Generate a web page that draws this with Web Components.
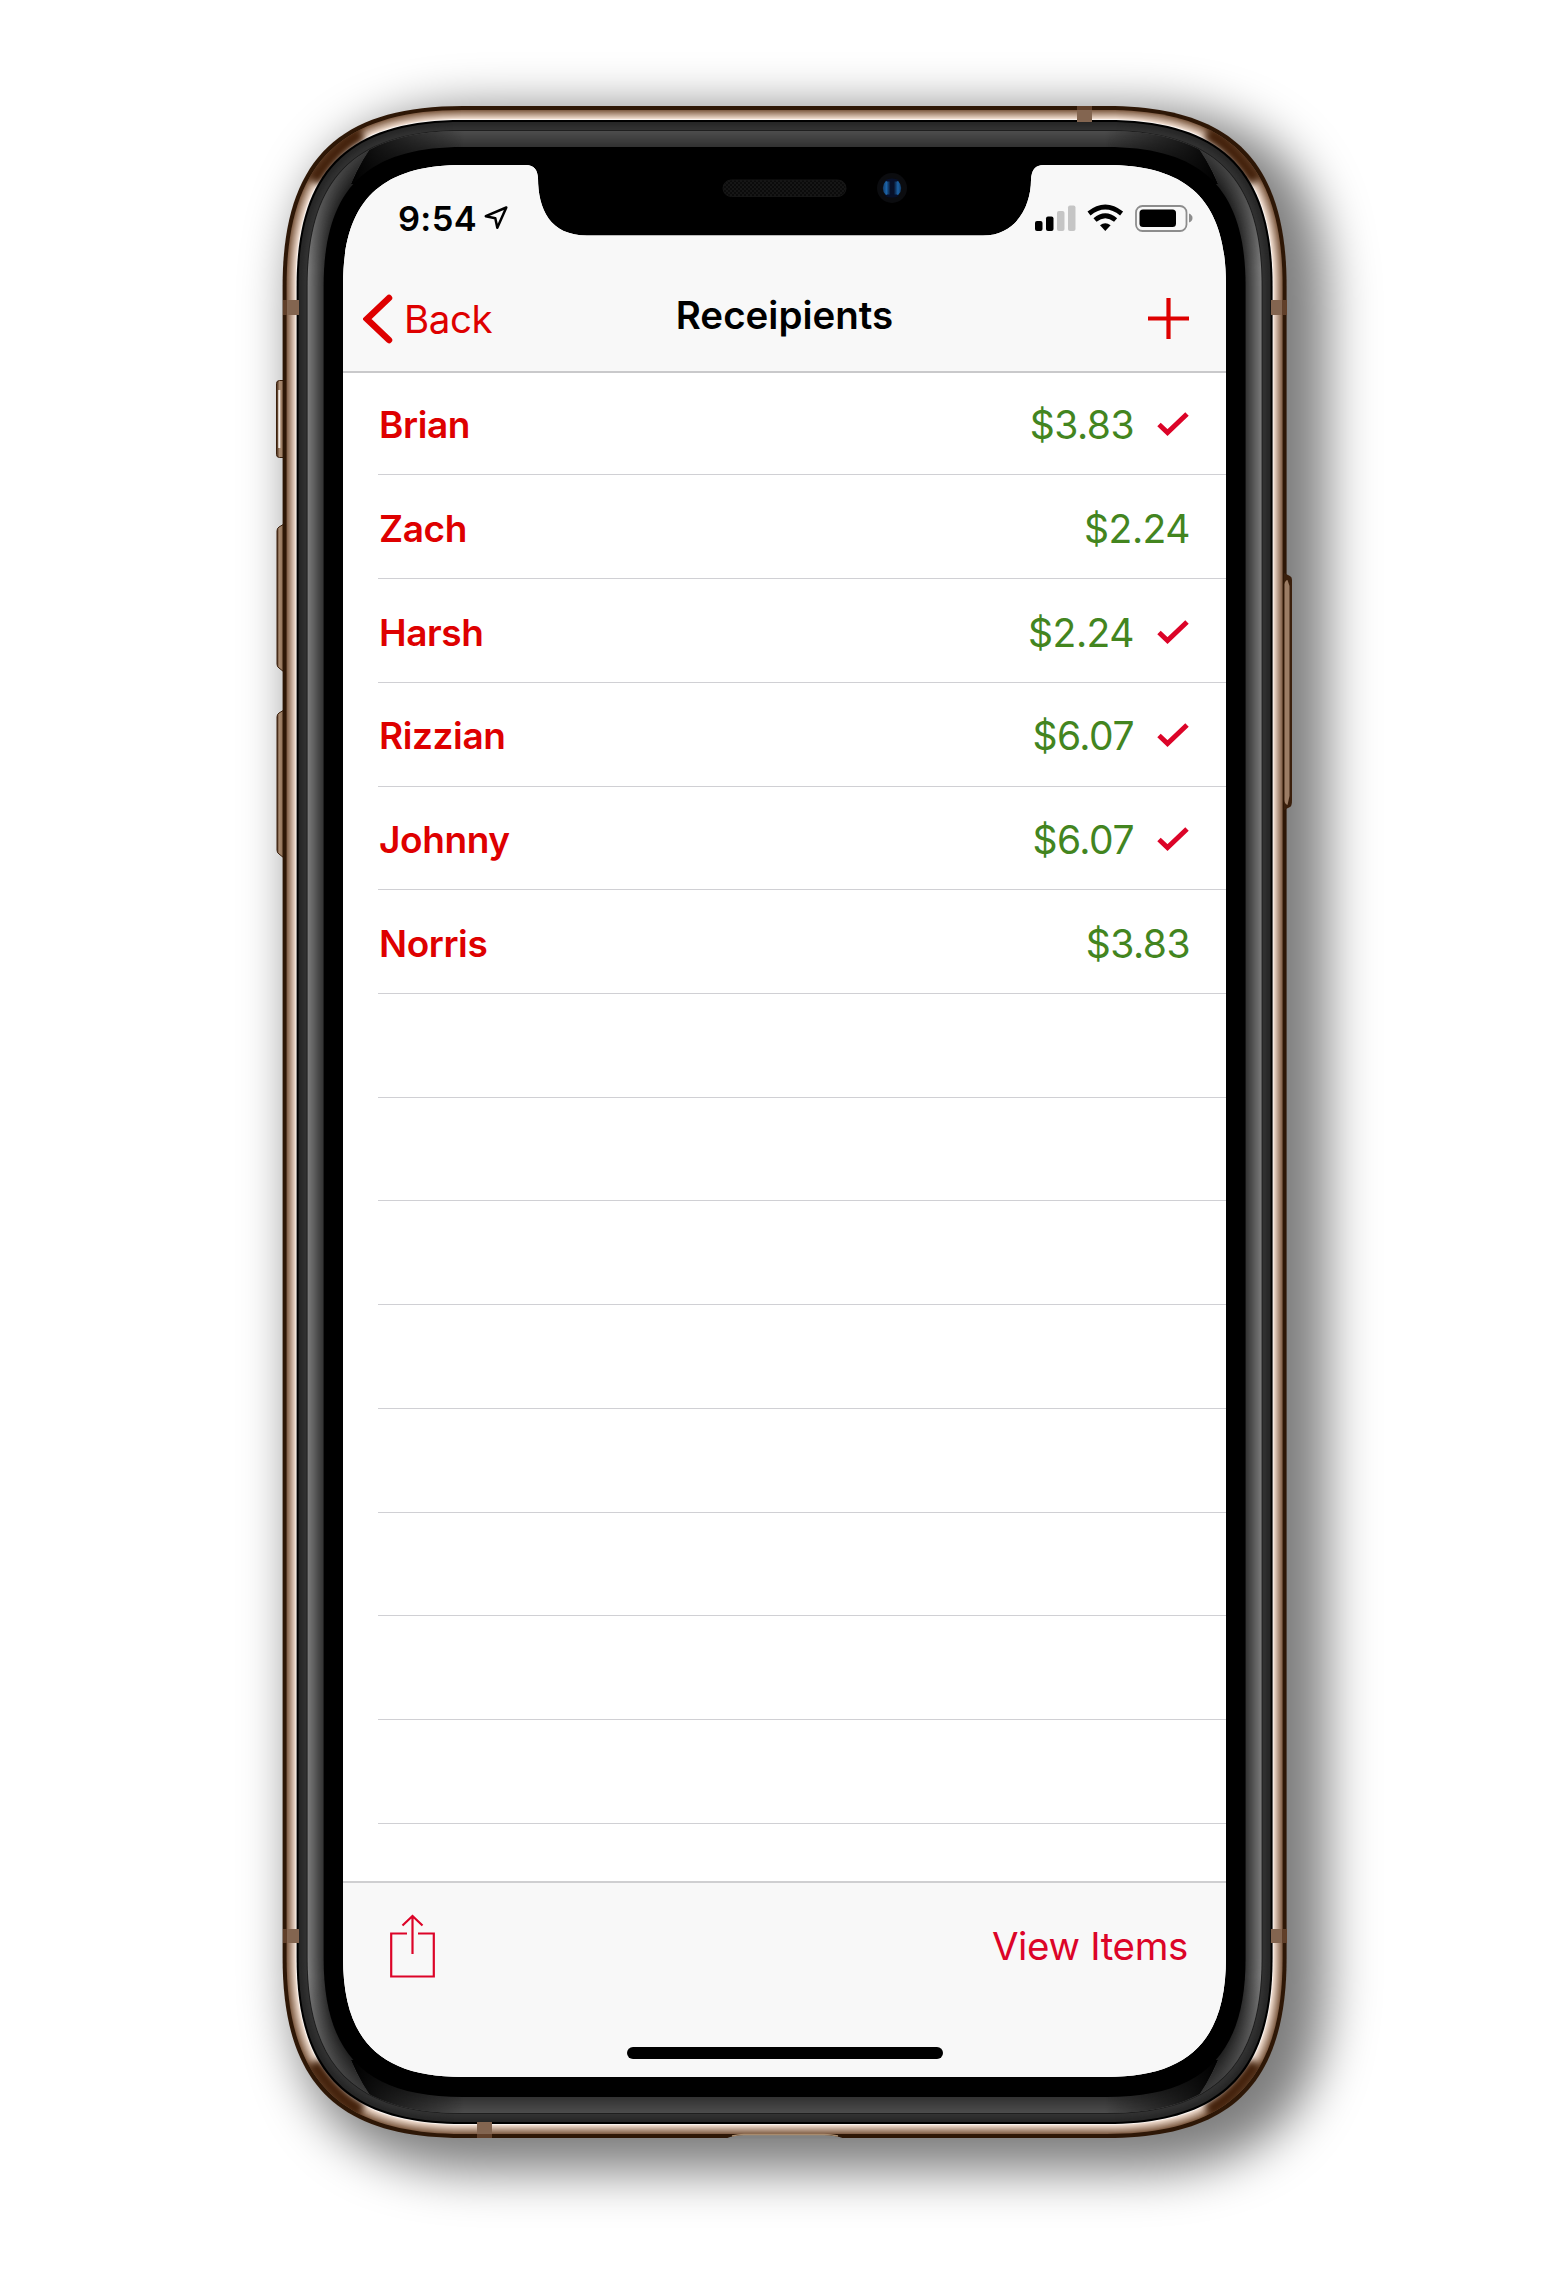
<!DOCTYPE html>
<html lang="en">
<head>
<meta charset="utf-8">
<title>Receipients</title>
<style>
body{margin:0;background:#fff;font-family:Inter,"Liberation Sans",sans-serif}
</style>
</head>
<body>
<phone-stage>
  <phone-frame></phone-frame>
  <phone-screen>
    <status-bar time="9:54"></status-bar>
    <nav-bar back="Back">Receipients</nav-bar>
    <recipient-list>
      <recipient-row name="Brian" amount="$3.83" checked></recipient-row>
      <recipient-row name="Zach" amount="$2.24"></recipient-row>
      <recipient-row name="Harsh" amount="$2.24" checked></recipient-row>
      <recipient-row name="Rizzian" amount="$6.07" checked></recipient-row>
      <recipient-row name="Johnny" amount="$6.07" checked></recipient-row>
      <recipient-row name="Norris" amount="$3.83"></recipient-row>
      <recipient-row></recipient-row><recipient-row></recipient-row><recipient-row></recipient-row><recipient-row></recipient-row>
      <recipient-row></recipient-row><recipient-row></recipient-row><recipient-row></recipient-row><recipient-row></recipient-row>
    </recipient-list>
    <tool-bar>View Items</tool-bar>
  </phone-screen>
</phone-stage>
<script>
const define = (name, render) => customElements.define(name, class extends HTMLElement {
  constructor() { super(); this.attachShadow({ mode: 'open' }); }
  connectedCallback() { this.shadowRoot.innerHTML = render(this); }
});

// Rectangle with continuous-curvature corners, inset by o from the phone's outline.
function shell(o, spread = 0) {
  const l = 282.6 + o - spread, t = 106 + o - spread, r = 1286.6 - o + spread, b = 2138 - o + spread;
  const e = 180 - o + spread, c = e * .305;
  return `M${l} ${t+e}C${l} ${t+c} ${l+c} ${t} ${l+e} ${t}H${r-e}C${r-c} ${t} ${r} ${t+c} ${r} ${t+e}V${b-e}C${r} ${b-c} ${r-c} ${b} ${r-e} ${b}H${l+e}C${l+c} ${b} ${l} ${b-c} ${l} ${b-e}Z`;
}
function mix(a, b, t) { return `rgb(${a.map((v, i) => Math.round(v + (b[i] - v) * t))})`; }
function rings(from, to, a, b) {
  let s = '';
  for (let o = from; o < to; o++) s += `<path d="${shell(o)}" fill="${mix(a, b, (o - from) / (to - from - 1))}"/>`;
  return s;
}

define('phone-stage', () => `
<style>:host{display:grid;width:1568px;height:2282px;overflow:hidden;background:#fff}
::slotted(*){grid-area:1/1}</style><slot></slot>`);

define('phone-frame', () => `
<style>:host{display:block}svg{display:block}</style>
<svg width="1568" height="2282" viewBox="0 0 1568 2282">
<defs>
 <filter id="blur" x="-20%" y="-20%" width="140%" height="140%" color-interpolation-filters="sRGB"><feGaussianBlur stdDeviation="25"/></filter>
 <filter id="soft" x="-20%" y="-20%" width="140%" height="140%" color-interpolation-filters="sRGB"><feGaussianBlur stdDeviation="3.500"/></filter>
 <linearGradient id="btn" x1="0" x2="1"><stop offset="0" stop-color="#3a1f0c"/><stop offset=".3" stop-color="#a98a70"/><stop offset=".75" stop-color="#93745b"/><stop offset="1" stop-color="#3a1f0c"/></linearGradient>
 <linearGradient id="fade" gradientUnits="userSpaceOnUse" x1="352" x2="1217" y1="0" y2="0"><stop offset="0" stop-color="#000"/><stop offset=".03" stop-color="#000" stop-opacity=".75"/><stop offset=".13" stop-color="#000" stop-opacity="0"/><stop offset=".87" stop-color="#000" stop-opacity="0"/><stop offset=".97" stop-color="#000" stop-opacity=".75"/><stop offset="1" stop-color="#000"/></linearGradient>
 <linearGradient id="vfade" gradientUnits="userSpaceOnUse" x1="0" x2="0" y1="140" y2="2104"><stop offset="0" stop-color="#000" stop-opacity=".6"/><stop offset=".065" stop-color="#000" stop-opacity="0"/><stop offset=".935" stop-color="#000" stop-opacity="0"/><stop offset="1" stop-color="#000" stop-opacity=".6"/></linearGradient>
 <clipPath id="ends"><path d="M398 118L376 141Q362 158 351 184H1218Q1207 158 1193 141L1171 118ZM398 2126L376 2103Q362 2086 351 2060H1218Q1207 2086 1193 2103L1171 2126Z"/></clipPath>
 <clipPath id="rim"><path d="${shell(4)}"/></clipPath>
 <pattern id="mesh" width="4" height="4" patternUnits="userSpaceOnUse"><rect width="4" height="4" fill="#0b0b0b"/><circle cx="1" cy="1" r=".8" fill="#222"/><circle cx="3" cy="3" r=".8" fill="#222"/></pattern>
 <linearGradient id="lens"><stop offset="0" stop-color="#123a66"/><stop offset=".2" stop-color="#1c64a8"/><stop offset=".42" stop-color="#071028"/><stop offset=".6" stop-color="#071028"/><stop offset=".82" stop-color="#1c64a8"/><stop offset="1" stop-color="#123a66"/></linearGradient>
</defs>
<path d="${shell(0, 15)}" transform="translate(25 18)" fill="#000" fill-opacity=".51" filter="url(#blur)"/>
<g fill="url(#btn)" stroke="#3a1f0c" stroke-width="1">
 <rect x="276.500" y="380.500" width="10" height="77" rx="3"/>
 <path d="M284 524l-5 3q-2 1-2 4v133q0 3 2 4l5 4zM284 710l-5 3q-2 1-2 4v133q0 3 2 4l5 4z"/>
</g>
<path d="M279.300 390v58" stroke="#f3ebe4" stroke-width="2"/>
<path d="${shell(0)}" fill="#2e1706"/>
${rings(4, 13, [132, 98, 74], [236, 216, 202])}
<path d="${shell(13)}" fill="#f8f2ee"/>
<g clip-path="url(#rim)"><g filter="url(#soft)" fill="none" stroke="#42200a" stroke-width="15"><path d="M1207 133Q1232 145 1256 181"/><path d="M362 133Q337 145 313 181"/><path d="M1207 2111Q1232 2099 1256 2063"/><path d="M362 2111Q337 2099 313 2063"/></g></g>
<path d="${shell(14)}" fill="#000"/>
${rings(16, 24, [38, 38, 38], [50, 50, 50])}
<path d="${shell(24)}" fill="#1f1f1f"/>
${rings(25, 41, [122, 122, 122], [52, 52, 52])}
<path d="${shell(25)}" fill="url(#vfade)"/>
<g clip-path="url(#ends)">${rings(25, 41, [76, 76, 76], [50, 50, 50])}<path d="${shell(25)}" fill="url(#fade)"/></g>
<path d="${shell(41)}" fill="#000"/>
<g fill="#836550"><rect x="283" y="300" width="16" height="15"/><rect x="1271" y="300" width="16" height="15"/><rect x="283" y="1929" width="16" height="14"/><rect x="1271" y="1929" width="16" height="14"/><rect x="1077" y="106" width="15" height="16"/><rect x="477" y="2122" width="15" height="16"/></g>
<g fill="#53301a" opacity=".7"><rect x="283" y="300" width="4" height="15"/><rect x="1282" y="300" width="5" height="15"/><rect x="283" y="1929" width="4" height="14"/><rect x="1282" y="1929" width="5" height="14"/><rect x="1077" y="106" width="15" height="4"/><rect x="477" y="2134" width="15" height="4"/></g>
<path d="M726 2138.500q8-3.500 18-3.500h80q11 0 20 3.500z" fill="#828282"/><path d="M732 2136q6-1.500 12-1.500h80q8 0 14 1.500" fill="none" stroke="#a88b6d" stroke-width="1.500"/>
<path d="M1284 573l6 3q2 1 2 4v220q0 6-2 7l-6 3z" fill="#3a1f0c"/><path d="M1284.500 584q1-4 3-4l2 6v210l-2 9q-3-1-3-5z" fill="#9b7c64"/>
<rect x="723" y="180" width="123" height="16.500" rx="8.200" fill="url(#mesh)" stroke="#161616"/>
<circle cx="892" cy="188" r="15" fill="#0b0c0f"/><circle cx="892" cy="188" r="9.200" fill="url(#lens)"/><path d="M885 180q7-3 14 0l-2 1.500h-10zM885 196q7 3 14 0l-2-1.500h-10z" fill="#07102a"/>
</svg>`);

define('phone-screen', () => `
<style>:host{display:flex;flex-direction:column;width:883px;height:1912px;margin:165px 0 0 343px;background:#fff;
clip-path:path("M0 120C0 36.600 36.600 0 120 0H183C191 0 194.500 5 195 13C195 44 207 70.500 244 70.500H640C674 70.500 688 40 688 15C688.500 5 692 0 701 0H763C846.400 0 883 36.600 883 120V1792C883 1875.400 846.400 1912 763 1912H120C36.600 1912 0 1875.400 0 1792Z")}</style><slot></slot>`);

define('status-bar', el => `
<style>:host{display:flex;align-items:center;justify-content:space-between;height:106px;padding:0 33px 0 55px;box-sizing:border-box;background:#f8f8f8;flex:none}
.l{display:flex;align-items:center;gap:7px}.t{font-size:34.500px;font-weight:600;line-height:40px;padding-top:1px;letter-spacing:.3px;color:#000}svg{display:block}</style>
<div class="l"><span class="t">${el.getAttribute('time')}</span>
<svg width="24" height="24" viewBox="0 0 24 24"><path d="M22.300 1.500L1.800 10.200 11.300 12.200 13.300 21.800Z" fill="none" stroke="#000" stroke-width="2.500" stroke-linejoin="round"/></svg></div>
<svg width="158" height="28" viewBox="1035 204 158 28">
<rect x="1035" y="221" width="7.500" height="10" rx="2"/><rect x="1046" y="216.500" width="7.500" height="14.500" rx="2"/><rect x="1057" y="211" width="7.500" height="20" rx="2" fill="#c5c5c5"/><rect x="1068" y="205.500" width="7.500" height="25.500" rx="2" fill="#c5c5c5"/>
<g fill="none" stroke="#000" stroke-width="4.800"><path d="M1089 213.500Q1105.300 200.500 1121.600 213.500"/><path d="M1095 220Q1105.300 211.500 1115.600 220"/></g><path d="M1100 225.300Q1105.300 221 1110.600 225.300L1105.300 231Z"/>
<rect x="1136" y="206" width="50.500" height="25" rx="6.500" fill="none" stroke="#8d8d8d" stroke-width="1.800"/><rect x="1139.500" y="209.500" width="36.500" height="17.500" rx="3.500"/><path d="M1189 213.500q3.500 1.500 3.500 4.500t-3.500 4.500z" fill="#8d8d8d"/></svg>`);

define('nav-bar', el => `
<style>:host{display:grid;grid-template-columns:1fr auto 1fr;align-items:center;height:102px;box-sizing:border-box;padding:0 20px 4px 20px;background:#f8f8f8;border-bottom:2px solid #c9c9cb;flex:none}
svg{display:block}.b{display:flex;align-items:center;gap:11px;color:#de0000;font-size:38.500px;line-height:46px}.b span{letter-spacing:-.4px}
.t{font-size:38.500px;font-weight:600;line-height:46px;padding-bottom:9px;letter-spacing:0;color:#000}.p{justify-self:end;margin:-1px 17px 0 0}</style>
<div class="b"><svg width="30" height="50" viewBox="0 0 30 50"><path d="M26 4L4 25 26 46" fill="none" stroke="#de0000" stroke-width="6.500" stroke-linecap="round"/></svg><span>${el.getAttribute('back')}</span></div>
<div class="t"><slot></slot></div>
<svg class="p" width="41" height="41" viewBox="0 0 41 41"><path d="M20.500 0V41M0 20.500H41" stroke="#de0000" stroke-width="4.200"/></svg>`);

define('recipient-list', () => `
<style>:host{display:flex;flex-direction:column;height:1508px;overflow:hidden;background:#fff;flex:none}
::slotted(:first-child){margin-top:-1.300px}</style><slot></slot>`);

define('recipient-row', el => {
  const name = el.getAttribute('name');
  return `
<style>:host{display:block;height:103.720px;flex:none;padding-left:35px;background:#fff}
.r{display:flex;align-items:center;height:100%;box-sizing:border-box;padding:3px 36px 0 0;border-bottom:1.500px solid #d0d0d4}
.n{flex:1;padding-left:1px;font-size:37px;font-weight:600;color:#de0000;letter-spacing:-.4px}.a{font-size:39px;color:#43851f;letter-spacing:-.5px}svg{display:block;margin:-1px 1px 0 23px}</style>
<div class="r">${name ? `<span class="n">${name}</span><span class="a">${el.getAttribute('amount')}</span>${el.hasAttribute('checked') ? '<svg width="32" height="26" viewBox="0 0 32 26"><path d="M2 13.500L10.500 21.500 30 3" fill="none" stroke="#dc0428" stroke-width="5"/></svg>' : ''}` : ''}</div>`;
});

define('tool-bar', () => `
<style>:host{display:flex;flex-direction:column;flex:1;background:#f8f8f8;border-top:2px solid #cfcfd1}
.r{display:flex;justify-content:space-between;align-items:center;height:125px;padding:0 38px 0 47px}svg{display:block}
.v{font-size:38.500px;color:#dc0428;letter-spacing:-.35px}.h{width:316px;height:12px;border-radius:6px;background:#000;align-self:center;margin-top:39px}</style>
<div class="r"><svg width="45" height="64" viewBox="0 0 45 64"><path d="M17 19.500H1.200V62.500H43.800V19.500H28M22.500 40V2M12.500 11.500L22.500 2 32.500 11.500" fill="none" stroke="#dc0428" stroke-width="2.200"/></svg><span class="v"><slot></slot></span></div><div class="h"></div>`);
</script>
</body>
</html>
